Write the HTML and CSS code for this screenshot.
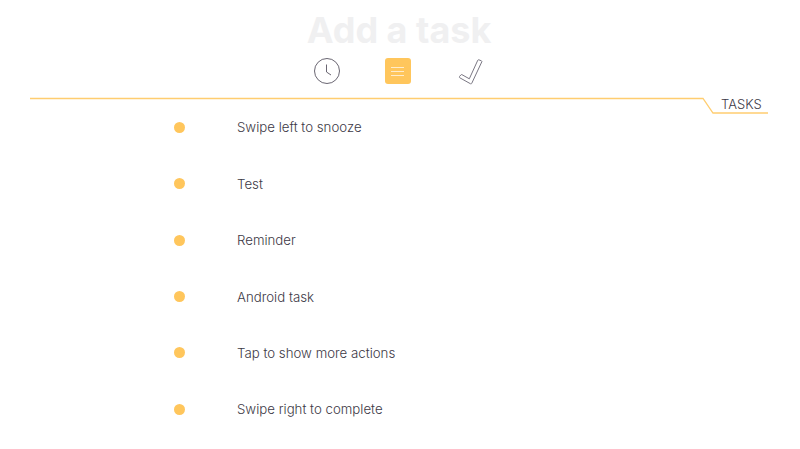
FILE: index.html
```html
<!DOCTYPE html>
<html lang="en">
<head>
    <meta charset="UTF-8">
    <meta name="viewport" content="width=device-width, initial-scale=1.0">
    <title>Add a task</title>
    <link rel="stylesheet" href="styles.css">
</head>
<body>

<h1 class="title">Add a task</h1>

<div class="toolbar">
    <svg class="icon" width="28" height="28" viewBox="0 0 28 28">
        <circle cx="14" cy="14" r="12.5" fill="none" stroke="#6a6672" stroke-width="1"/>
        <path d="M13.5 7.5V15L18 18" fill="none" stroke="#6a6672" stroke-width="1"/>
    </svg>
    <div class="list-btn">
        <div></div>
        <div></div>
        <div></div>
    </div>
    <svg class="icon icon-check" width="28" height="28" viewBox="0 0 28 28">
        <path d="M3.5 19.5L5 17.8C5.3 17.5 5.6 17.5 6 17.7L13.3 21.8L21.8 3.2C22 2.8 22.4 2.7 22.8 2.8L25.4 3.8C25.8 4 26 4.4 25.8 4.8L15.8 26.2C15.5 26.9 15 27 14.4 26.7L3.8 20.8C3.3 20.5 3.2 19.9 3.5 19.5Z" fill="none" stroke="#7a7783" stroke-width="1"/>
    </svg>
</div>

<div class="section-head">
    <svg class="section-line" width="800" height="18" viewBox="0 0 800 18">
        <path d="M30 1.5H703L713 16H768" fill="none" stroke="#ffcd70" stroke-width="1.3"/>
    </svg>
    <span class="section-label">TASKS</span>
</div>

<ul class="tasks">
    <li><span class="dot"></span>Swipe left to snooze</li>
    <li><span class="dot"></span>Test</li>
    <li><span class="dot"></span>Reminder</li>
    <li><span class="dot"></span>Android task</li>
    <li><span class="dot"></span>Tap to show more actions</li>
    <li><span class="dot"></span>Swipe right to complete</li>
</ul>

</body>
</html>
```

FILE: styles.css
```css
body {
    margin: 0;
    font-family: Inter, "Open Sans", sans-serif;
    background-color: #fff;
    color: #3d3946;
    overflow: hidden;
}
.title {
    margin: 0;
    padding-top: 9px;
    padding-right: 2px;
    height: 51px;
    box-sizing: border-box;
    text-align: center;
    font-size: 36px;
    line-height: 43px;
    font-weight: 700;
    color: #f0f0f1;
}
.toolbar {
    display: flex;
    justify-content: center;
    align-items: center;
    gap: 44px;
    height: 40px;
    margin-left: -4px;
}
.icon-check {
    margin-left: 1px;
}
.list-btn {
    width: 26px;
    height: 26px;
    background-color: #ffc65c;
    border-radius: 3px;
    display: flex;
    flex-direction: column;
    justify-content: center;
    align-items: center;
    gap: 3px;
}
.list-btn div {
    width: 13px;
    height: 1px;
    background-color: #ffeccb;
}
.section-head {
    position: relative;
    height: 2.2px;
    margin-top: 6px;
}
.section-line {
    position: absolute;
    top: 0;
    left: 0;
}
.section-label {
    position: absolute;
    top: -1px;
    left: 721px;
    font-size: 13px;
    font-weight: 300;
    line-height: 16px;
}
.tasks {
    list-style: none;
    margin: 0;
    padding: 0 0 0 174px;
}
.tasks li {
    display: flex;
    align-items: center;
    height: 56.4px;
    font-size: 13.25px;
    font-weight: 300;
}
.dot {
    width: 11px;
    height: 11px;
    border-radius: 50%;
    background-color: #ffc65c;
    margin-right: 52px;
}
```
